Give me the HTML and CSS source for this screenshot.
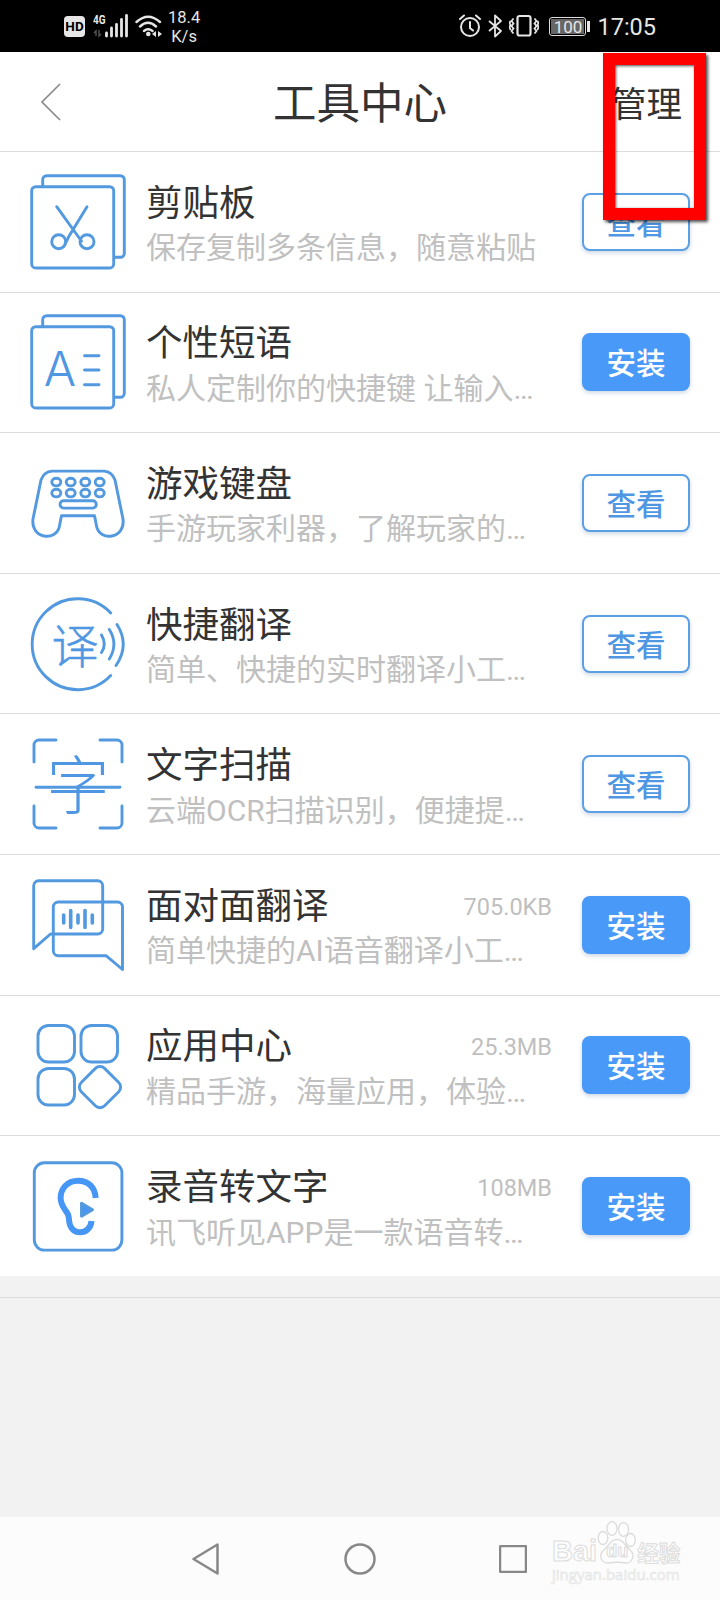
FILE: index.html
```html
<!DOCTYPE html>
<html lang="zh-CN">
<head>
<meta charset="utf-8">
<title>工具中心</title>
<link rel="stylesheet" href="styles.css">
</head>
<body>
<div class="screen">
  <div class="status">
    <div class="status-left">
      <span class="hd">HD</span>
      <div class="signal"><span class="net">4G</span>
        <svg width="36" height="24" viewBox="0 0 36 24"><path d="M3 22v-5l-2 2M6 16v6l2-2" fill="none" stroke="#555" stroke-width="1.4"/><path d="M13.500 22v-3M18.500 22v-8M23.500 22V10.500M28.500 22V5.500M33.500 22V1.500" stroke="#e6e6e6" stroke-width="2.800" stroke-linecap="round"/></svg>
      </div>
      <svg class="wifi" width="28" height="24" viewBox="0 0 28 24"><path d="M1.500 8Q13 -2.500 25 8M5 12.500Q13 5 21 12.500M9 17Q13 13.500 17.500 17" fill="none" stroke="#e6e6e6" stroke-width="2.400" stroke-linecap="round"/><circle cx="13.300" cy="20" r="2.300" fill="#e6e6e6"/><path d="M17 20l4-3v6zM27 20l-4-3v6z" fill="#e6e6e6"/></svg>
      <div class="speed"><span>18.4</span><span>K/s</span></div>
    </div>
    <div class="status-right">
      <svg width="22" height="24" viewBox="0 0 22 24"><g fill="none" stroke="#e6e6e6" stroke-width="2" stroke-linecap="round"><circle cx="11" cy="13" r="9"/><path d="M11 8v6l3 2.500M1 5l4-3.500M21 5l-4-3.500"/></g></svg>
      <svg class="bt" width="16" height="24" viewBox="0 0 16 24"><path d="M2 7l12 10-6 5.500V1.500L14 7 2 17" fill="none" stroke="#e6e6e6" stroke-width="1.800" stroke-linejoin="round"/></svg>
      <svg class="vib" width="30" height="24" viewBox="0 0 30 24"><g fill="none" stroke="#e6e6e6"><rect x="8.500" y="2" width="13" height="19.500" rx="2" stroke-width="2.200"/><path d="M4.500 4.500l-2 2.500 2 2.500-2 2.500 2 2.500-2 2.500 2 2.500M1.500 7l-1 2 1 2-1 2 1 3M25.500 4.500l2 2.500-2 2.500 2 2.500-2 2.500 2 2.500-2 2.500M28.500 7l1 2-1 2 1 2-1 3" stroke-width="1.800"/></g></svg>
      <div class="battery"><span>100</span></div><i class="cap"></i>
      <span class="clock">17:05</span>
    </div>
  </div>

  <div class="header">
    <svg class="back" width="22" height="38" viewBox="0 0 22 38"><path d="M20 1L2 19l18 18" fill="none" stroke="#8c8c8c" stroke-width="1.700"/></svg>
    <h1>工具中心</h1>
    <span class="manage">管理</span>
  </div>

  <div class="list">
    <div class="row">
      <svg class="icon" viewBox="0 0 100 100"><path d="M14.700 14V7.700a4 4 0 0 1 4-4h73.600a4 4 0 0 1 4 4v73.600a4 4 0 0 1-4 4h-6"/><rect x="3.700" y="14.700" width="82" height="81.300" rx="4"/><path d="M28.700 34.700L50.500 65L53.500 69M59 34.700L40.500 65Q39 69 37 72"/><circle cx="30.700" cy="69.700" r="7"/><circle cx="59" cy="69.700" r="7"/></svg>
      <div class="info"><div class="top"><span class="name">剪贴板</span></div><div class="desc">保存复制多条信息，随意粘贴</div></div>
      <button class="btn view">查看</button>
    </div>
    <div class="row">
      <svg class="icon" viewBox="0 0 100 100"><path d="M14.700 14V7.700a4 4 0 0 1 4-4h73.600a4 4 0 0 1 4 4v73.600a4 4 0 0 1-4 4h-6"/><rect x="3.700" y="14.700" width="82" height="81.300" rx="4"/><text class="letter" x="32" y="74" text-anchor="middle">A</text><path d="M56.500 43.700h14.500M56.500 58h14.500M56.500 72.700h14.500"/></svg>
      <div class="info"><div class="top"><span class="name">个性短语</span></div><div class="desc">私人定制你的快捷键 让输入…</div></div>
      <button class="btn install">安装</button>
    </div>
    <div class="row">
      <svg class="icon" viewBox="0 0 100 100"><path d="M24 18.100H76Q84 18.500 87 27L95 66C97.500 86 71.500 89 68.500 73Q67.500 67 66.500 62.800H33.500Q32.500 67 31.500 73C28.500 89 2.500 86 5 66L13 27Q16 18.500 24 18.100Z"/><g><ellipse cx="28.300" cy="29.100" rx="4.500" ry="3.800"/><ellipse cx="42.700" cy="29.100" rx="4.500" ry="3.800"/><ellipse cx="57.300" cy="29.100" rx="4.500" ry="3.800"/><ellipse cx="71.700" cy="29.100" rx="4.500" ry="3.800"/><ellipse cx="28.300" cy="40.100" rx="4.500" ry="3.800"/><ellipse cx="42.700" cy="40.100" rx="4.500" ry="3.800"/><ellipse cx="57.300" cy="40.100" rx="4.500" ry="3.800"/><ellipse cx="71.700" cy="40.100" rx="4.500" ry="3.800"/></g><rect x="32" y="47.800" width="36.300" height="7.300" rx="3.600"/></svg>
      <div class="info"><div class="top"><span class="name">游戏键盘</span></div><div class="desc">手游玩家利器，了解玩家的…</div></div>
      <button class="btn view">查看</button>
    </div>
    <div class="row">
      <svg class="icon" viewBox="0 0 100 100"><path d="M82.700 18.900A45.500 45.500 0 1 0 82.700 81.500M73.500 41Q79 50 73.500 58.500M81.300 35.500Q90.500 50 81.300 65M89 30.500Q102 51 88 71.500"/><text class="glyph small" x="47" y="69" font-size="47" text-anchor="middle">译</text></svg>
      <div class="info"><div class="top"><span class="name">快捷翻译</span></div><div class="desc">简单、快捷的实时翻译小工…</div></div>
      <button class="btn view">查看</button>
    </div>
    <div class="row">
      <svg class="icon" viewBox="0 0 100 100"><text class="glyph" x="50" y="73.500" font-size="63" text-anchor="middle">字</text><path d="M6 28V11a5 5 0 0 1 5-5H28M72 6H89a5 5 0 0 1 5 5V28M94 72V89a5 5 0 0 1-5 5H72M28 94H11a5 5 0 0 1-5-5V72M8 53.300H92"/></svg>
      <div class="info"><div class="top"><span class="name">文字扫描</span></div><div class="desc">云端OCR扫描识别，便捷提…</div></div>
      <button class="btn view">查看</button>
    </div>
    <div class="row">
      <svg class="icon" viewBox="0 0 100 100"><path d="M5.700 73.700V10.700a5 5 0 0 1 5-5H69.700a5 5 0 0 1 5 5V54a5 5 0 0 1-5 5H22.500ZM94.500 94.500V32a5 5 0 0 0-5-5H30.300a5 5 0 0 0-5 5V75.700a5 5 0 0 0 5 5H78Z"/><path class="bars" d="M35.700 40v8M42.700 35.500v17M50 40v8M57 35.500v17M64.300 40v8"/></svg>
      <div class="info"><div class="top"><span class="name">面对面翻译</span><span class="size">705.0KB</span></div><div class="desc">简单快捷的AI语音翻译小工…</div></div>
      <button class="btn install">安装</button>
    </div>
    <div class="row">
      <svg class="icon" viewBox="0 0 100 100"><rect x="10" y="10.500" width="36.500" height="36.500" rx="10.500"/><rect x="53" y="10.500" width="36.500" height="36.500" rx="10.500"/><rect x="10" y="53.500" width="36.500" height="36.500" rx="10.500"/><rect x="55.500" y="55.600" width="33" height="33" rx="6.500" transform="rotate(45 72 72.100)"/></svg>
      <div class="info"><div class="top"><span class="name">应用中心</span><span class="size">25.3MB</span></div><div class="desc">精品手游，海量应用，体验…</div></div>
      <button class="btn install">安装</button>
    </div>
    <div class="row">
      <svg class="icon" viewBox="0 0 100 100"><rect x="6.300" y="6.800" width="87.600" height="87.300" rx="10"/><path class="ear" d="M67.700 42C67 31 60 24.700 50 24.700C39 24.700 32.600 33 32.600 42C32.600 50 38 54 40 58.500C41.500 62 40.500 65 42 69C44 74.500 48 76.300 52 76.300C58 76.300 63 72 63.500 65"/><path class="solid" d="M53.500 47.300v13l11-6.500z"/></svg>
      <div class="info"><div class="top"><span class="name">录音转文字</span><span class="size">108MB</span></div><div class="desc">讯飞听见APP是一款语音转…</div></div>
      <button class="btn install">安装</button>
    </div>
  </div>
  <div class="footer-gap"></div>
  <div class="blank"></div>

  <div class="nav">
    <svg width="28" height="32" viewBox="0 0 28 32"><path d="M25.500 1.500v29L1.500 16z"/></svg>
    <svg width="32" height="32" viewBox="0 0 32 32"><circle cx="16" cy="16" r="14.500"/></svg>
    <svg width="28" height="28" viewBox="0 0 28 28"><rect x="1" y="1" width="26" height="26" rx="1"/></svg>
  </div>

  <div class="highlight"></div>
  <div class="watermark">
    <div class="brand"><span class="bai">Bai</span><span class="paw"><svg width="40" height="46" viewBox="0 0 40 46"><g fill="#fdfdfd" stroke="#dcdcdc" stroke-width="1.300"><ellipse cx="6" cy="18" rx="4.800" ry="6.500"/><ellipse cx="15" cy="8.500" rx="5" ry="6.800"/><ellipse cx="26.500" cy="9.500" rx="5" ry="6.800"/><ellipse cx="33.500" cy="20" rx="4.800" ry="6.500"/><path d="M20 19.500C27 19.500 28 26 33 30C39 35 35 43 29 43Q20 41.500 11 43C4 43 1 35 7 30C12 26 13 19.500 20 19.500Z"/></g></svg><b>du</b></span><span class="exp">经验</span></div>
    <div class="url">jingyan.baidu.com</div>
  </div>
</div>
</body>
</html>
```
FILE: styles.css
```css
* { box-sizing: border-box; }
body { margin: 0; font-family: Roboto, "Noto Sans CJK SC", sans-serif; }
.screen { position: relative; width: 720px; height: 1600px; display: flex; flex-direction: column; background: #f2f2f2; overflow: hidden; }

.status { height: 52px; flex: none; background: #000; color: #e6e6e6; display: flex; justify-content: space-between; padding: 0 64px; }
.status-left, .status-right { display: flex; align-items: center; }
.hd { width: 21px; height: 21px; border-radius: 4px; background: #e6e6e6; color: #000; font: 700 13.500px/21px Roboto, sans-serif; text-align: center; }
.signal { position: relative; margin-left: 8px; height: 24px; }
.signal svg { display: block; }
.net { position: absolute; left: 0; top: 0; font: 700 12.500px/12px Roboto, sans-serif; transform: scaleX(.8); transform-origin: left; }
.wifi { margin-left: 6px; }
.speed { display: flex; flex-direction: column; align-items: center; margin-left: 5px; padding-top: 1px; font-size: 16.500px; line-height: 19px; }
.bt { margin-left: 6px; }
.vib { margin-left: 6px; }
.battery { margin-left: 10px; width: 37px; height: 19px; border: 1px solid #ddd; border-radius: 3px; padding: 1px; }
.battery span { display: block; height: 15px; background: #666; font-size: 17px; line-height: 16px; text-align: center; }
.cap { width: 3px; height: 11px; background: #e6e6e6; margin-left: 1px; }
.clock { margin-left: 7px; padding-top: 2px; font-size: 23.500px; }

.header { height: 100px; flex: none; background: #fff; border-bottom: 1px solid #dcdcdc; display: grid; grid-template-columns: 1fr auto 1fr; align-items: center; padding: 1px 38px 0 40px; color: #333; }
.header h1 { margin: 0 2px 0 0; padding-top: 6px; font-size: 43.500px; font-weight: 400; line-height: 60px; }
.manage { justify-self: end; padding-top: 6px; font-size: 35.500px; line-height: 50px; }

.list { flex: none; background: #fff; }
.row { height: 140.600px; border-bottom: 1px solid #dcdcdc; display: flex; align-items: center; padding: 0 30px 0 28px; }
.row:last-child { border-bottom: 0; height: 140px; }
.icon { width: 100px; height: 100px; flex: none; fill: none; stroke: #5299e0; stroke-width: 2.900px; stroke-linecap: round; stroke-linejoin: round; }
.icon text { fill: #4f97e2; stroke: none; font-family: "Noto Sans CJK SC", sans-serif; }
.icon .glyph { font-weight: 300; }
.icon .small { stroke: #4f97e2; stroke-width: .5px; }
.icon .letter { font-family: Inter, sans-serif; font-weight: 300; font-size: 48px; }
.icon .bars { stroke-width: 3.600px; }
.icon .ear { stroke: #4697f5; stroke-width: 6px; stroke-linecap: butt; }
.icon .solid { fill: #4697f5; }
.info { width: 406px; margin-left: 18px; padding-top: 8px; flex: none; }
.top { display: flex; justify-content: space-between; align-items: center; height: 45px; color: #333; }
.name { font-size: 36.500px; line-height: 44px; }
.size { font-size: 23.500px; line-height: 28px; color: #bfbfbf; }
.desc { font-size: 30px; line-height: 44px; height: 44px; color: #c0c0c0; white-space: nowrap; }
.btn { width: 108px; height: 58px; margin-left: auto; padding: 0 0 2px; border-radius: 8px; font: 500 29.500px/50px "Noto Sans CJK SC", sans-serif; box-shadow: 0 2px 4px rgba(60, 100, 150, .25); }
.view { background: #fff; border: 2px solid #5b9fe4; color: #4f97e2; }
.install { background: #4899f8; border: 2px solid #4899f8; color: #fff; }

.footer-gap { height: 22px; flex: none; border-bottom: 1px solid #dcdcdc; }
.blank { flex: 1; }
.nav { height: 83px; flex: none; background: #fcfcfc; display: flex; justify-content: space-between; align-items: center; padding: 0 193px 0 192px; }
.nav svg { fill: none; stroke: #888; stroke-width: 2.500px; stroke-linejoin: round; }

.highlight { position: absolute; left: 603px; top: 53px; width: 103px; height: 167px; border: 12px solid #f00; box-shadow: 2px 2px 3px rgba(0, 0, 0, .7), inset 1px 1px 3px rgba(0, 0, 0, .7); }

.watermark { position: absolute; left: 552px; top: 1523px; color: #fdfdfd; -webkit-text-stroke: 1px #dcdcdc; }
.brand { display: flex; align-items: flex-end; height: 43px; }
.bai { font: 700 29px/30px "Liberation Sans", sans-serif; }
.paw { position: relative; height: 46px; }
.paw b { position: absolute; left: 9px; top: 21px; font: 700 18px/20px "Liberation Sans", sans-serif; }
.exp { font: 700 21.500px/28px "Noto Sans CJK SC", sans-serif; }
.url { font: 400 15px/17px "Open Sans", sans-serif; -webkit-text-stroke: .6px #e2e2e2; }
```
